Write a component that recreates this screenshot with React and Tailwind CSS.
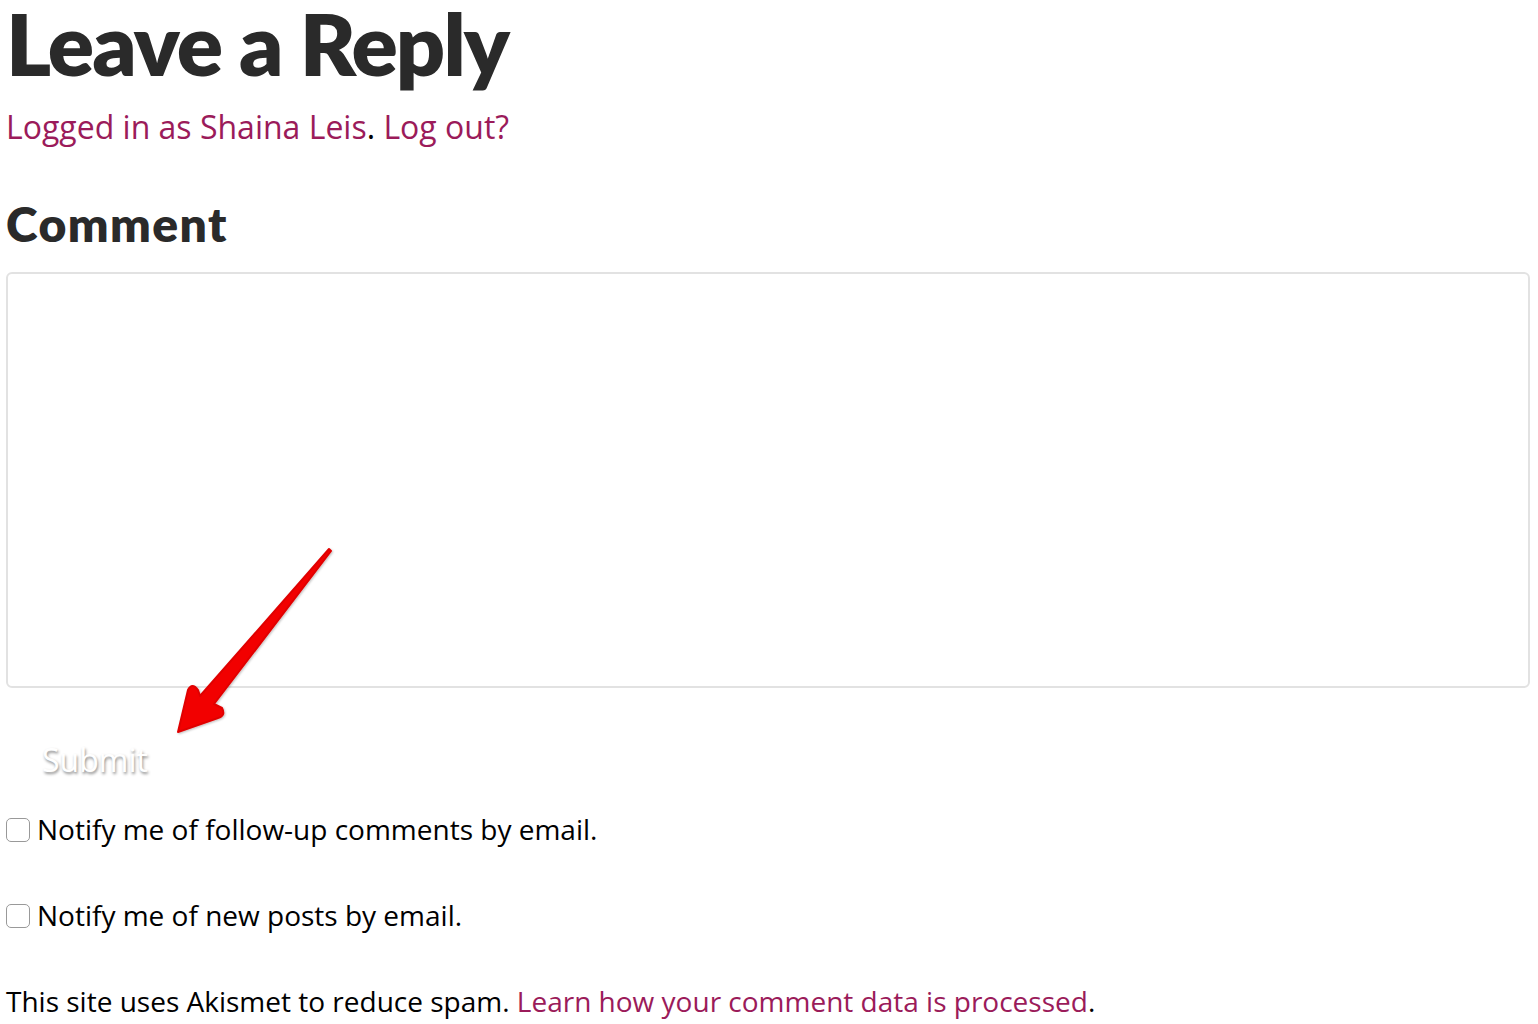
import React from 'react';

const RedArrow = () => (
    <svg className="absolute left-[170px] top-[540px]" width="170" height="200" viewBox="170 540 170 200">
        <defs>
            <filter id="sh" x="-20%" y="-20%" width="140%" height="140%">
                <feDropShadow dx="1" dy="1" stdDeviation="1" floodColor="#000" floodOpacity="0.25" />
            </filter>
        </defs>
        <path
            d="M329 549 L331 551 L214 704 L222 708 Q226 716 218 718 L178 732 L188 690 Q192 682 198 690 L200 696 Z"
            fill="#f20000"
            stroke="#e00000"
            strokeWidth="2"
            strokeLinejoin="round"
            filter="url(#sh)"
        />
    </svg>
);

const App = () => {
    return (
        <div className="relative w-[1538px] h-[1024px] bg-white overflow-hidden pl-[6px] pr-[8px]" style={{ fontFamily: '"Open Sans", sans-serif' }}>
            <h1 className="text-[86px] leading-none font-extrabold tracking-[-0.022em] text-[#2a2a2a] font-['Lato',sans-serif]">
                Leave a Reply
            </h1>
            <p className="mt-[21px] text-[32px] leading-[40px] text-[#9b1b5a]">
                <a href="#">Logged in as Shaina Leis</a><span className="text-black">.</span> <a href="#">Log out?</a>
            </p>
            <h2 className="mt-[53px] text-[48px] leading-none font-extrabold tracking-[0.03em] text-[#2a2a2a] font-['Lato',sans-serif]">
                Comment
            </h2>
            <textarea className="block mt-[24px] w-[1524px] h-[416px] border-2 border-[#e2e2e2] rounded-[6px] resize-none outline-none" />
            <button className="mt-[52px] ml-[36px] text-[32px] leading-[40px] text-white [text-shadow:1px_2px_3px_rgba(0,0,0,0.45)]">
                Submit
            </button>
            <label className="flex items-center mt-[29px] text-[28px] leading-[40px] text-black">
                <span className="w-[24px] h-[24px] border border-[#999] rounded-[5px] mr-[7px] mt-[2px] bg-white" />
                Notify me of follow-up comments by email.
            </label>
            <label className="flex items-center mt-[46px] text-[28px] leading-[40px] text-black">
                <span className="w-[24px] h-[24px] border border-[#999] rounded-[5px] mr-[7px] mt-[2px] bg-white" />
                Notify me of new posts by email.
            </label>
            <p className="mt-[48px] text-[28px] leading-[36px] text-black">
                This site uses Akismet to reduce spam. <a href="#" className="text-[#9b1b5a]">Learn how your comment data is processed</a>.
            </p>
            <RedArrow />
        </div>
    );
};

export default App;
